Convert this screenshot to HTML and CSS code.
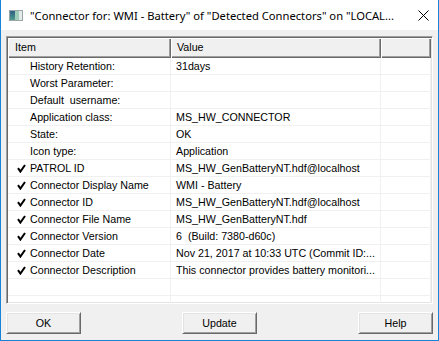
FILE: index.html
```html
<!DOCTYPE html>
<html lang="en">
<head>
    <meta charset="UTF-8">
    <title>Connector for: WMI - Battery</title>
    <link rel="stylesheet" href="styles.css">
</head>
<body>

<div class="window">
    <div class="titlebar">
        <svg class="app-icon" width="14" height="11" viewBox="0 0 14 11">
            <defs>
                <linearGradient id="pane" x1="0" y1="0" x2="0" y2="1">
                    <stop offset="0" stop-color="#2f5f86"/>
                    <stop offset="1" stop-color="#4f9a8c"/>
                </linearGradient>
            </defs>
            <rect x="0.5" y="0.5" width="13" height="10" fill="#d7dcdc" stroke="#9aa5a5"/>
            <rect x="1" y="1" width="5" height="9" fill="url(#pane)"/>
            <rect x="6" y="1" width="4" height="9" fill="#9fcdb8"/>
            <rect x="10" y="1" width="3" height="9" fill="#e3e8e8"/>
        </svg>
        <span class="title">"Connector for: WMI - Battery" of "Detected Connectors" on "LOCAL...</span>
        <svg class="close" width="11" height="11" viewBox="0 0 11 11">
            <path d="M0.5 0.5 10.5 10.5 M10.5 0.5 0.5 10.5" stroke="#000" stroke-width="1" fill="none"/>
        </svg>
    </div>

    <div class="client">
        <div class="list">
            <div class="list-header">
                <div class="hcell">Item</div>
                <div class="hcell">Value</div>
                <div class="hcell"></div>
            </div>

            <div class="row"><div class="cell name"><span class="mark"></span>History Retention:</div><div class="cell value">31days</div><div class="cell"></div></div>
            <div class="row"><div class="cell name"><span class="mark"></span>Worst Parameter:</div><div class="cell value"></div><div class="cell"></div></div>
            <div class="row"><div class="cell name"><span class="mark"></span>Default&nbsp; username:</div><div class="cell value"></div><div class="cell"></div></div>
            <div class="row"><div class="cell name"><span class="mark"></span>Application class:</div><div class="cell value">MS_HW_CONNECTOR</div><div class="cell"></div></div>
            <div class="row"><div class="cell name"><span class="mark"></span>State:</div><div class="cell value">OK</div><div class="cell"></div></div>
            <div class="row"><div class="cell name"><span class="mark"></span>Icon type:</div><div class="cell value">Application</div><div class="cell"></div></div>
            <div class="row"><div class="cell name"><span class="mark"><svg width="9" height="9" viewBox="0 0 9 9"><path d="M1 4.2 3.4 7.6 8 1" fill="none" stroke="#000" stroke-width="2"/></svg></span>PATROL ID</div><div class="cell value">MS_HW_GenBatteryNT.hdf@localhost</div><div class="cell"></div></div>
            <div class="row"><div class="cell name"><span class="mark"><svg width="9" height="9" viewBox="0 0 9 9"><path d="M1 4.2 3.4 7.6 8 1" fill="none" stroke="#000" stroke-width="2"/></svg></span>Connector Display Name</div><div class="cell value">WMI - Battery</div><div class="cell"></div></div>
            <div class="row"><div class="cell name"><span class="mark"><svg width="9" height="9" viewBox="0 0 9 9"><path d="M1 4.2 3.4 7.6 8 1" fill="none" stroke="#000" stroke-width="2"/></svg></span>Connector ID</div><div class="cell value">MS_HW_GenBatteryNT.hdf@localhost</div><div class="cell"></div></div>
            <div class="row"><div class="cell name"><span class="mark"><svg width="9" height="9" viewBox="0 0 9 9"><path d="M1 4.2 3.4 7.6 8 1" fill="none" stroke="#000" stroke-width="2"/></svg></span>Connector File Name</div><div class="cell value">MS_HW_GenBatteryNT.hdf</div><div class="cell"></div></div>
            <div class="row"><div class="cell name"><span class="mark"><svg width="9" height="9" viewBox="0 0 9 9"><path d="M1 4.2 3.4 7.6 8 1" fill="none" stroke="#000" stroke-width="2"/></svg></span>Connector Version</div><div class="cell value">6&nbsp; (Build: 7380-d60c)</div><div class="cell"></div></div>
            <div class="row"><div class="cell name"><span class="mark"><svg width="9" height="9" viewBox="0 0 9 9"><path d="M1 4.2 3.4 7.6 8 1" fill="none" stroke="#000" stroke-width="2"/></svg></span>Connector Date</div><div class="cell value">Nov 21, 2017 at 10:33 UTC (Commit ID:...</div><div class="cell"></div></div>
            <div class="row"><div class="cell name"><span class="mark"><svg width="9" height="9" viewBox="0 0 9 9"><path d="M1 4.2 3.4 7.6 8 1" fill="none" stroke="#000" stroke-width="2"/></svg></span>Connector Description</div><div class="cell value">This connector provides battery monitori...</div><div class="cell"></div></div>
            <div class="row"><div class="cell name"></div><div class="cell value"></div><div class="cell"></div></div>
            <div class="row"><div class="cell name"></div><div class="cell value"></div><div class="cell"></div></div>
        </div>

        <div class="buttons">
            <button class="btn">OK</button>
            <button class="btn">Update</button>
            <button class="btn">Help</button>
        </div>
    </div>
</div>

</body>
</html>
```

FILE: styles.css
```css
* {
    margin: 0;
    padding: 0;
    box-sizing: border-box;
}

body {
    width: 439px;
    height: 341px;
    overflow: hidden;
    font-family: 'Liberation Sans', Arial, sans-serif;
    font-size: 10.7px;
    color: #000;
}

.window {
    width: 439px;
    height: 341px;
    border: 1px solid #1883d7;
    border-top: none;
    background: #f0f0f0;
    display: flex;
    flex-direction: column;
}

/* title bar */
.titlebar {
    height: 30px;
    flex: none;
    background: #fff;
    display: flex;
    align-items: center;
    padding: 0 9px 0 8px;
}

.app-icon {
    flex: none;
    margin-right: 7px;
}

.title {
    flex: 1;
    font-family: 'Noto Sans', sans-serif;
    font-size: 11.2px;
    white-space: nowrap;
    overflow: hidden;
}

.close {
    flex: none;
    margin-top: 1px;
}

/* client area */
.client {
    flex: 1;
    display: flex;
    flex-direction: column;
    padding: 6px 5px;
}

.list {
    height: 268px;
    flex: none;
    background: #fff;
    border: 1px solid;
    border-color: #a0a0a0 #fff #fff #a0a0a0;
    padding: 1px;
    box-shadow: inset 1px 1px #696969, inset -1px -1px #e3e3e3;
    overflow: hidden;
}

.list-header,
.row {
    display: grid;
    grid-template-columns: 163px 210px 50px;
}

.list-header {
    height: 20px;
}

.hcell {
    background: #f0f0f0;
    padding-left: 7px;
    line-height: 19px;
    box-shadow: inset 1px 1px #fff, inset -1px -1px #696969, inset -2px -2px #a0a0a0;
}

.hcell + .hcell {
    padding-left: 6px;
}

.row {
    height: 17px;
    border-bottom: 1px solid #f0f0f0;
}

.cell {
    border-right: 1px solid #f0f0f0;
    white-space: nowrap;
    overflow: hidden;
    line-height: 16px;
}

.name {
    display: flex;
    align-items: center;
    padding-left: 9px;
}

.mark {
    width: 13px;
    flex: none;
    display: flex;
    align-items: center;
    padding-top: 1px;
}

.value {
    padding-left: 5px;
}

/* buttons */
.buttons {
    display: flex;
    justify-content: space-between;
    margin-top: 8px;
}

.btn {
    width: 75px;
    height: 22px;
    font-family: 'Liberation Sans', Arial, sans-serif;
    font-size: 10.7px;
    color: #000;
    background: #f0f0f0;
    border: 1px solid;
    border-color: #fff #696969 #696969 #fff;
    box-shadow: inset 1px 1px #e3e3e3, inset -1px -1px #a0a0a0;
    outline: none;
}
```
